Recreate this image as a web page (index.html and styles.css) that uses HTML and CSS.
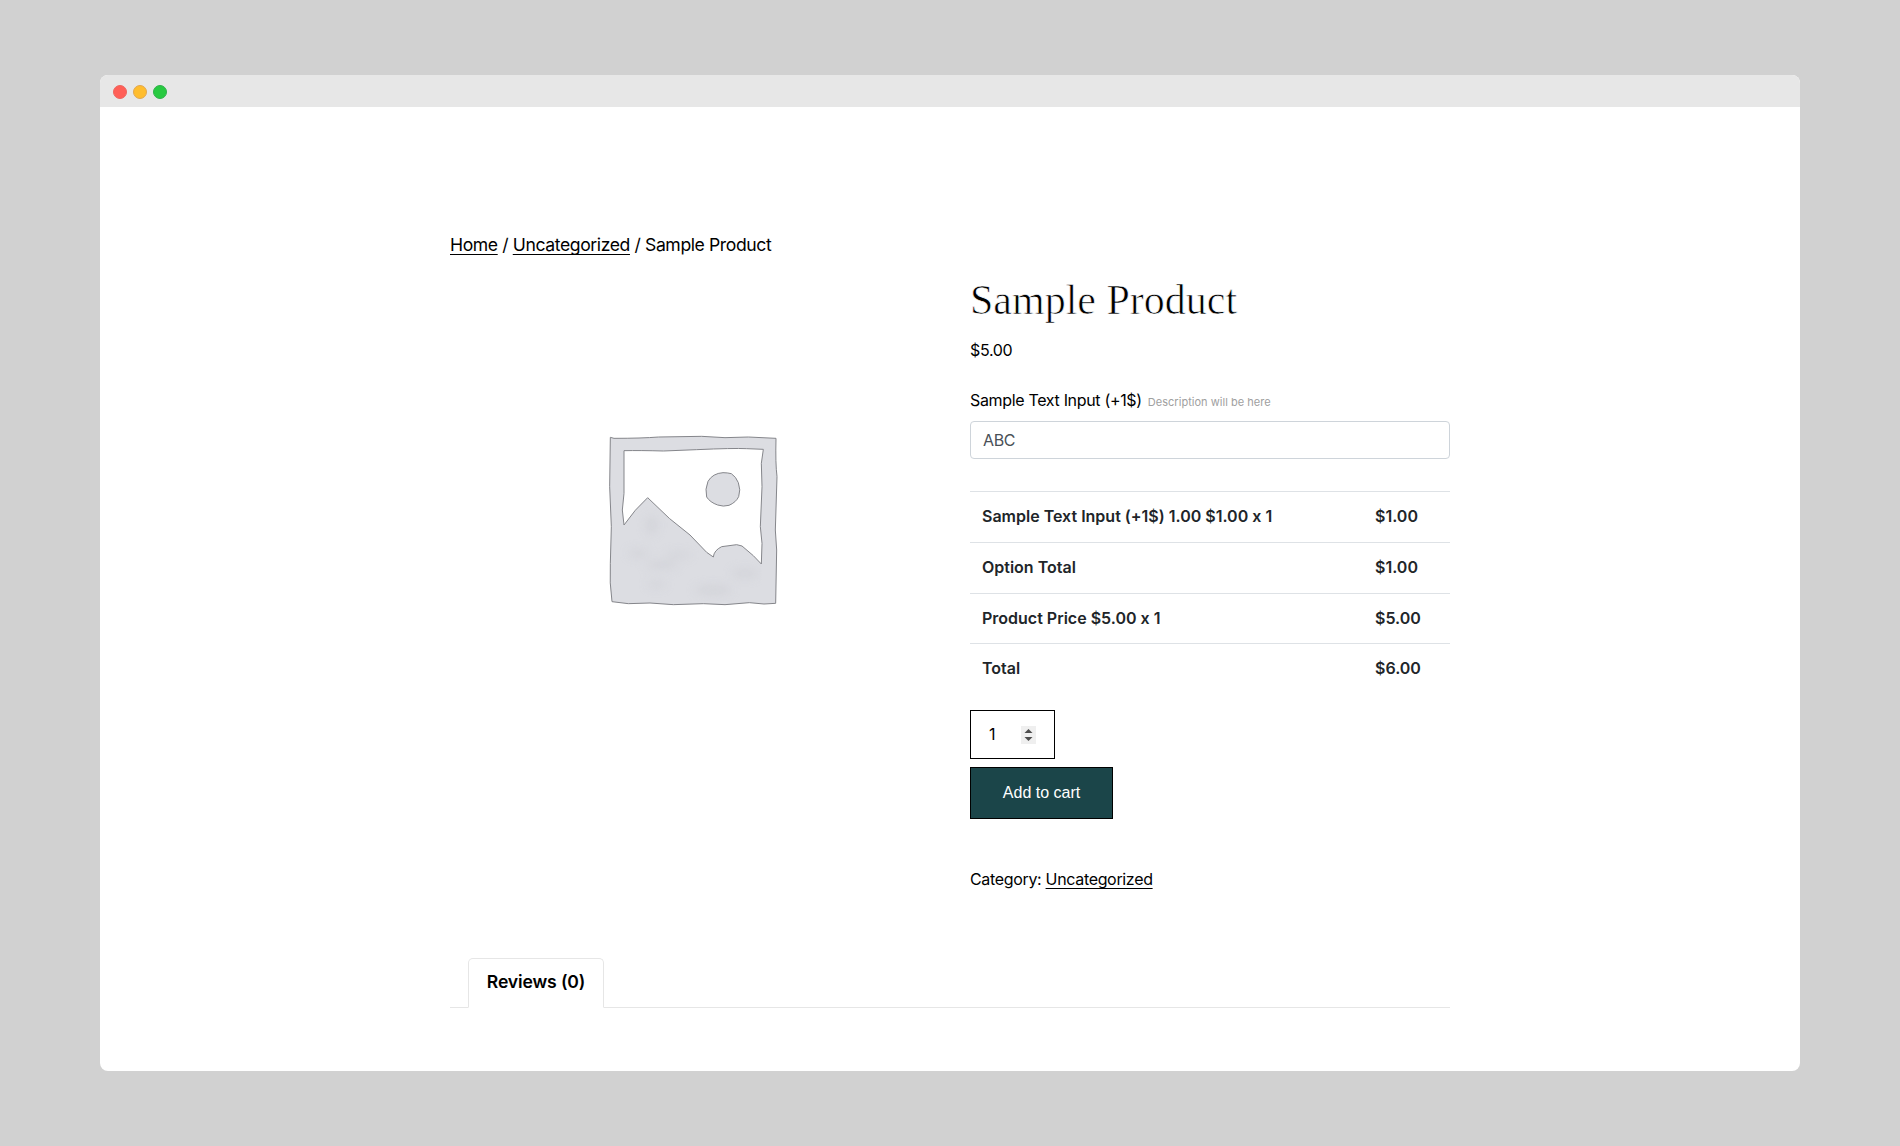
FILE: index.html
```html
<!DOCTYPE html>
<html lang="en">
<head>
<meta charset="utf-8">
<title>Sample Product</title>
<link rel="stylesheet" href="styles.css">
</head>
<body>
<div class="window">
  <header class="titlebar"><span class="dot red"></span><span class="dot yellow"></span><span class="dot green"></span></header>
  <main class="page">
    <nav class="breadcrumb"><a class="link">Home</a> / <a class="link">Uncategorized</a> / Sample Product</nav>
    <div class="product">
      <div class="gallery">
        <svg class="placeholder" viewBox="0 0 630 600" fill="#dcdde2" stroke="#85868b" stroke-width="3" stroke-linejoin="round">
          <defs>
            <clipPath id="land"><path d="M102 315Q135 267 173 233L239 296 300 345 350 397 370 411Q372 391 395 380L440 374 456 378 490 407 514 432 518 545 66 545 66 300Z"/></clipPath>
            <filter id="soft"><feGaussianBlur stdDeviation="14"/></filter>
          </defs>
          <path fill-rule="evenodd" d="M61 52L72 55Q155 55 206 51L335 49 405 53 475 51 558 55Q556 130 561 170L556 330 560 390 557 550 522 552 478 548 405 554 340 551 250 554 180 549 115 551 66 545Q58 490 61 430L64 320 59 200ZM102 92Q150 91 220 93L320 89Q430 84 470 86L520 88 514 130 516 200 511 320 516 370 514 432 490 407 456 378 440 374 395 380Q372 391 370 411L350 397 300 345 239 296 173 233Q135 267 102 315L97 270 102 220Z"/>
          <g clip-path="url(#land)"><g fill="#cccdd3" stroke="none" filter="url(#soft)" opacity=".5">
            <ellipse cx="145" cy="400" rx="30" ry="12"/><ellipse cx="215" cy="435" rx="48" ry="13"/><ellipse cx="265" cy="405" rx="38" ry="10"/><ellipse cx="200" cy="493" rx="28" ry="10"/><ellipse cx="370" cy="510" rx="55" ry="16"/><ellipse cx="465" cy="460" rx="40" ry="14"/><ellipse cx="185" cy="315" rx="18" ry="28"/>
          </g></g>
          <path d="M399 158Q412 158 424 161Q438 170 445 188Q453 210 446 230Q438 247 417 256Q400 261 383 255Q360 247 350 231Q344 208 354 184Q368 160 399 158Z"/>
        </svg>
      </div>
      <section class="summary">
        <h1 class="title">Sample Product</h1>
        <p class="price">$5.00</p>
        <label class="label">Sample Text Input (+1$)<small class="hint">Description will be here</small></label>
        <div class="field">ABC</div>
        <div class="totals">
          <div class="row"><span>Sample Text Input (+1$) 1.00 $1.00 x 1</span><span class="amount">$1.00</span></div>
          <div class="row"><span>Option Total</span><span class="amount">$1.00</span></div>
          <div class="row short"><span>Product Price $5.00 x 1</span><span class="amount">$5.00</span></div>
          <div class="row short"><span>Total</span><span class="amount">$6.00</span></div>
        </div>
        <div class="quantity"><span class="count">1</span>
          <svg class="spinner" viewBox="0 0 15 18"><path fill="#efefef" d="M0 0h15v18H0z"/><path fill="#4d4d4d" d="M7.5 3L11.5 7h-8zM7.5 15L3.5 11h8z"/></svg>
        </div>
        <button class="cart">Add to cart</button>
        <p class="category">Category: <a class="link">Uncategorized</a></p>
      </section>
    </div>
    <div class="tabs"><div class="tab">Reviews (0)</div></div>
  </main>
</div>
</body>
</html>
```
FILE: styles.css
```css
* { box-sizing: border-box; }
body { margin: 0; padding: 75px 100px; height: 1146px; background: #d1d1d1; font-family: Inter, "Liberation Sans", sans-serif; font-feature-settings: "calt" 0; color: #000; overflow: hidden; }
.window { height: 996px; background: #fff; border-radius: 8px; overflow: hidden; }
.titlebar { height: 32px; background: #e7e7e7; display: flex; align-items: center; gap: 6px; padding: 2px 0 0 13px; }
.dot { width: 14px; height: 14px; border-radius: 50%; border: 1px solid; }
.red { background: #ff5f57; border-color: #ed655e; }
.yellow { background: #ffbd2e; border-color: #e2a74e; }
.green { background: #28ca41; border-color: #2fb04a; }
.page { width: 1000px; margin: 0 auto; padding-top: 126px; }
.breadcrumb { height: 44px; line-height: 24px; font-size: 17.6px; letter-spacing: -.4px; white-space: nowrap; }
.link { text-decoration: underline; text-decoration-thickness: 1px; text-underline-offset: 3px; text-decoration-skip-ink: none; }
.product { display: flex; justify-content: space-between; height: 681px; }
.gallery { width: 490px; height: 486px; display: flex; align-items: center; justify-content: center; }
.placeholder { width: 210px; height: 200px; }
.summary { width: 480px; font-size: 16px; letter-spacing: -.33px; }
.title { margin: 0; height: 61px; line-height: 46px; font-family: "Liberation Serif", serif; font-weight: 300; font-size: 42px; letter-spacing: 0; white-space: nowrap; -webkit-text-stroke: .7px #fff; }
.price { margin: 0; height: 50px; line-height: 24px; }
.label { display: flex; align-items: center; height: 33px; padding-bottom: 10px; gap: 6px; white-space: nowrap; }
.hint { font-size: 11px; color: #a0a0a0; padding-top: 4px; letter-spacing: .03px; }
.field { height: 38px; border: 1px solid #ced4da; border-radius: 4px; padding: 0 12px; line-height: 37px; color: #495057; }
.totals { margin-top: 32px; color: #212529; font-weight: 600; letter-spacing: 0; }
.row { display: grid; grid-template-columns: 393px 1fr; height: 51px; border-top: 1px solid #dee2e6; padding-left: 12px; line-height: 48px; white-space: nowrap; }
.short { height: 50px; line-height: 49px; }
.quantity { margin-top: 17px; width: 85px; height: 49px; border: 1px solid #000; display: flex; align-items: center; justify-content: space-between; padding: 0 18px; }
.count { padding-bottom: 2px; }
.spinner { width: 15px; height: 18px; }
.cart { display: block; margin-top: 8px; width: 143px; height: 52px; border: 1px solid #000; background: #1b4549; color: #fff; font: 16px "Liberation Sans", sans-serif; padding: 0; }
.category { margin: 48px 0 0; line-height: 24px; }
.tabs { height: 50px; padding-left: 18px; border-bottom: 1px solid #e6e6e6; }
.tab { width: 136px; height: 50px; border: 1px solid #e6e6e6; border-bottom-color: #fff; border-radius: 5px 5px 0 0; background: #fff; text-align: center; font-size: 17.6px; letter-spacing: -.15px; font-weight: 600; line-height: 45px; }
```
